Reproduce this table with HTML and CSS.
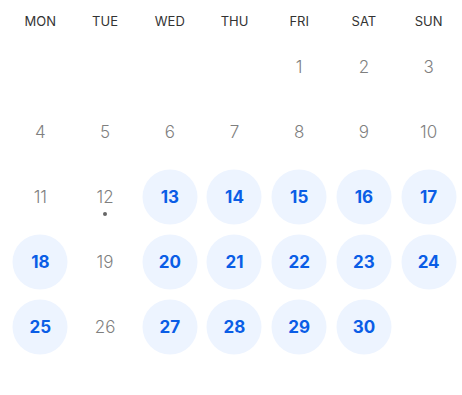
FILE: index.html
```html
<!DOCTYPE html>
<html lang="en">
<head>
<meta charset="utf-8">
<title>Calendar</title>
<link rel="stylesheet" href="styles.css">
</head>
<body>
<div class="calendar">
  <div class="weekdays">
    <div class="wd">MON</div><div class="wd">TUE</div><div class="wd">WED</div><div class="wd">THU</div><div class="wd">FRI</div><div class="wd">SAT</div><div class="wd">SUN</div>
  </div>
  <div class="days">
    <div class="day empty"></div><div class="day empty"></div><div class="day empty"></div><div class="day empty"></div>
    <div class="day"><span class="num">1</span></div>
    <div class="day"><span class="num">2</span></div>
    <div class="day"><span class="num">3</span></div>
    <div class="day"><span class="num">4</span></div>
    <div class="day"><span class="num">5</span></div>
    <div class="day"><span class="num">6</span></div>
    <div class="day"><span class="num">7</span></div>
    <div class="day"><span class="num">8</span></div>
    <div class="day"><span class="num">9</span></div>
    <div class="day"><span class="num">10</span></div>
    <div class="day"><span class="num">11</span></div>
    <div class="day today"><span class="num">12</span><span class="dot"></span></div>
    <div class="day avail"><span class="num">13</span></div>
    <div class="day avail"><span class="num">14</span></div>
    <div class="day avail"><span class="num">15</span></div>
    <div class="day avail"><span class="num">16</span></div>
    <div class="day avail"><span class="num">17</span></div>
    <div class="day avail"><span class="num">18</span></div>
    <div class="day"><span class="num">19</span></div>
    <div class="day avail"><span class="num">20</span></div>
    <div class="day avail"><span class="num">21</span></div>
    <div class="day avail"><span class="num">22</span></div>
    <div class="day avail"><span class="num">23</span></div>
    <div class="day avail"><span class="num">24</span></div>
    <div class="day avail"><span class="num">25</span></div>
    <div class="day"><span class="num">26</span></div>
    <div class="day avail"><span class="num">27</span></div>
    <div class="day avail"><span class="num">28</span></div>
    <div class="day avail"><span class="num">29</span></div>
    <div class="day avail"><span class="num">30</span></div>
  </div>
</div>
</body>
</html>
```
FILE: styles.css
```css
html, body {
  margin: 0;
  padding: 0;
  background: #ffffff;
}
body {
  font-family: "Inter", "Lato", "Liberation Sans", sans-serif;
}
.calendar {
  width: 453px;
  padding-left: 8px;
}
.weekdays {
  display: grid;
  grid-template-columns: repeat(7, 1fr);
  box-sizing: border-box;
  height: 34px;
  padding-top: 6px;
  align-items: start;
}
.wd {
  text-align: center;
  font-size: 13px;
  line-height: 30px;
  height: 28px;
  color: #333333;
  font-weight: 400;
}
.days {
  display: grid;
  grid-template-columns: repeat(7, 1fr);
  grid-auto-rows: 65px;
}
.day {
  position: relative;
  display: flex;
  align-items: center;
  justify-content: center;
}
.num {
  font-size: 17px;
  color: #7f7f7f;
  font-weight: 300;
}
.day.avail::before {
  content: "";
  position: absolute;
  width: 55px;
  height: 55px;
  border-radius: 50%;
  background: #edf4ff;
  left: 50%;
  top: 50%;
  transform: translate(-50%, -50%);
}
.day.avail .num {
  position: relative;
  color: #0a5de6;
  font-weight: 700;
}
.dot {
  position: absolute;
  width: 4px;
  height: 4px;
  border-radius: 50%;
  background: #666666;
  left: 50%;
  top: 50%;
  margin-left: -2px;
  margin-top: 15px;
}
```
